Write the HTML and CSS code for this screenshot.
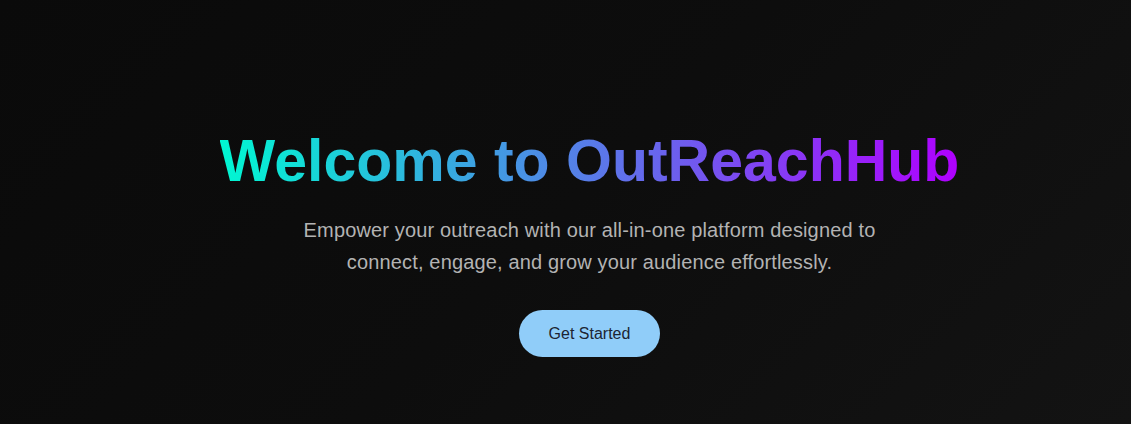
FILE: index.html
```html
<!DOCTYPE html>
<html lang="en">
<head>
<meta charset="utf-8">
<title>OutReachHub</title>
<link rel="stylesheet" href="styles.css">
</head>
<body>
<main class="hero">
  <h1 class="hero-title">Welcome to OutReachHub</h1>
  <p class="hero-text">Empower your outreach with our all-in-one platform designed to connect, engage, and grow your audience effortlessly.</p>
  <a class="hero-btn" href="#">Get Started</a>
</main>
</body>
</html>
```
FILE: styles.css
```css
* { box-sizing: border-box; }
html, body { margin: 0; height: 100%; }
body {
  font-family: "Liberation Sans", Arial, sans-serif;
  background: linear-gradient(135deg, #0a0a0a 0%, #0d0d0d 50%, #131313 100%);
  color: #fff;
}
.hero {
  height: 100vh;
  padding: 61px 0 0 48px;
  display: flex;
  flex-direction: column;
  align-items: center;
  justify-content: center;
  text-align: center;
}
.hero-title {
  margin: 0;
  font-size: 59px;
  line-height: 1.15;
  font-weight: 700;
  background: linear-gradient(90deg, #00f7d2 0%, #b000ff 100%);
  -webkit-background-clip: text;
  background-clip: text;
  color: transparent;
}
.hero-text {
  margin: 18px 0 32px;
  max-width: 610px;
  font-size: 20px;
  line-height: 32px;
  letter-spacing: 0.15px;
  color: #b3b3b3;
}
.hero-btn {
  display: inline-block;
  padding: 14px 30px;
  font-size: 16px;
  line-height: 19px;
  color: #1c2433;
  background: #90cdf9;
  border-radius: 999px;
  text-decoration: none;
}
```
